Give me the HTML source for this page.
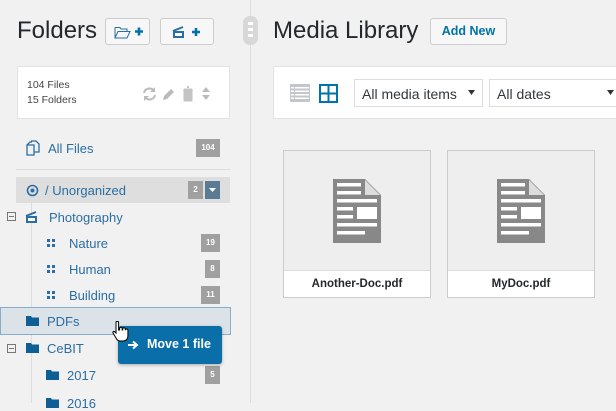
<!DOCTYPE html>
<html><head><meta charset="utf-8">
<style>
*{box-sizing:border-box;margin:0;padding:0}
body{width:616px;height:403px;overflow:hidden;background:#f1f1f1;font-family:"Liberation Sans",sans-serif;position:relative;color:#23282d}
.a{position:absolute}
.btn{position:absolute;border:1px solid #ccc;background:#f7f7f7;border-radius:3px}
.lbl{position:absolute;font-size:13px;color:#2b6ea3}
.bd{position:absolute;background:#a0a0a0;color:#fff;font-size:8px;font-weight:bold;text-align:center;line-height:18px;height:18px}
.fold{position:absolute;width:13px;height:10px}
</style></head><body>
<!-- left -->
<div class="a" style="left:17px;top:17px;font-size:24px;color:#23282d">Folders</div>
<div class="btn" style="left:105px;top:18px;width:45px;height:27px">
<svg class="a" style="left:8px;top:7px" width="30" height="13" viewBox="0 0 30 13"><path d="M1 1.5h5l1 1.5h6v2.5 M1 1.5V12 M1 12L4 5.5h12L13 12Z" fill="none" stroke="#2b6ea3" stroke-width="1"/><path d="M21 5.5h8M25 1.5v8" stroke="#0073aa" stroke-width="2.6"/></svg></div>
<div class="btn" style="left:160px;top:18px;width:54px;height:27px">
<svg class="a" style="left:11px;top:6px" width="32" height="14" viewBox="0 0 32 14"><path d="M1 6h11v7H1Z" fill="#2b6ea3"/><path d="M1 6 L11 2" stroke="#2b6ea3" stroke-width="2"/><rect x="3" y="8" width="7" height="3" fill="#fff"/><path d="M20 7h8M24 3v8" stroke="#0073aa" stroke-width="2.6"/></svg></div>
<div class="a" style="left:17px;top:66px;width:213px;height:53px;background:#fff;border:1px solid #e2e2e2"></div>
<div class="a" style="left:27px;top:78px;font-size:10.5px;color:#444;line-height:15px">104 Files<br>15 Folders</div>
<svg class="a" style="left:142px;top:86px" width="74" height="16" viewBox="0 0 74 16"><path d="M2 7a5.5 5.5 0 0 1 10-2M13 9a5.5 5.5 0 0 1-10 2" fill="none" stroke="#bbb" stroke-width="2"/><path d="M13 1v5h-5Z M2 15v-5h5Z" fill="#bbb"/><path d="M21 14l1-4 7-7 3 3-7 7Z" fill="#bbb"/><path d="M42 3h8M41 4h10M42 5h8v10h-8Z" fill="#c4c4c4" stroke="#c4c4c4"/><path d="M45 1h2" stroke="#c4c4c4" stroke-width="2"/><path d="M60 6l4-5 4 5Z M60 9l4 5 4-5Z" fill="#bbb"/></svg>
<svg class="a" style="left:26px;top:140px" width="14" height="16" viewBox="0 0 14 16"><path d="M1 5h7v10H1Z M5 1h5l3 3v8H8" fill="none" stroke="#2b6ea3" stroke-width="1.3"/><path d="M1 5l3-3h2" fill="none" stroke="#2b6ea3" stroke-width="1.3"/></svg>
<div class="lbl" style="left:48px;top:141px">All Files</div>
<div class="bd" style="left:196px;top:139px;width:24px">104</div>
<div class="a" style="left:16px;top:169px;width:214px;height:1px;background:#ddd"></div>
<div class="a" style="left:16px;top:177px;width:214px;height:26px;background:#dedede"></div>
<div class="a" style="left:31px;top:200px;width:1px;height:203px;background:#ddd"></div>
<svg class="a" style="left:26px;top:184px" width="13" height="13"><circle cx="6.5" cy="6.5" r="5" fill="none" stroke="#2b6ea3" stroke-width="1.6"/><circle cx="6.5" cy="6.5" r="2" fill="#2b6ea3"/></svg>
<div class="lbl" style="left:45px;top:183px">/ Unorganized</div>
<div class="bd" style="left:188px;top:181px;width:15px">2</div>
<div class="a" style="left:205px;top:181px;width:15px;height:18px;background:#5b7b94"></div>
<svg class="a" style="left:209px;top:188px" width="7" height="4"><path d="M0 0h7L3.5 4Z" fill="#fff"/></svg>
<!-- tree -->
<svg class="a" style="left:7px;top:212px" width="9" height="9"><rect x=".5" y=".5" width="8" height="8" fill="none" stroke="#777"/><path d="M2 4.5h5" stroke="#777"/></svg>
<svg class="a" style="left:25px;top:210px" width="14" height="13" viewBox="0 0 14 13"><path d="M1 6h11v7H1Z" fill="#2b6ea3"/><path d="M1 6 L11 2" stroke="#2b6ea3" stroke-width="2"/><rect x="3" y="8" width="7" height="3" fill="#fff"/></svg>
<div class="lbl" style="left:49px;top:210px">Photography</div>
<svg class="a" style="left:47px;top:239px" width="8" height="8"><rect width="3" height="3" fill="#2b6ea3"/><rect x="5" width="3" height="3" fill="#2b6ea3"/><rect y="5" width="3" height="3" fill="#2b6ea3"/><rect x="5" y="5" width="3" height="3" fill="#2b6ea3"/></svg>
<div class="lbl" style="left:69px;top:236px">Nature</div>
<div class="bd" style="left:201px;top:234px;width:19px">19</div>
<svg class="a" style="left:47px;top:265px" width="8" height="8"><rect width="3" height="3" fill="#2b6ea3"/><rect x="5" width="3" height="3" fill="#2b6ea3"/><rect y="5" width="3" height="3" fill="#2b6ea3"/><rect x="5" y="5" width="3" height="3" fill="#2b6ea3"/></svg>
<div class="lbl" style="left:69px;top:262px">Human</div>
<div class="bd" style="left:205px;top:260px;width:15px">8</div>
<svg class="a" style="left:47px;top:291px" width="8" height="8"><rect width="3" height="3" fill="#2b6ea3"/><rect x="5" width="3" height="3" fill="#2b6ea3"/><rect y="5" width="3" height="3" fill="#2b6ea3"/><rect x="5" y="5" width="3" height="3" fill="#2b6ea3"/></svg>
<div class="lbl" style="left:69px;top:288px">Building</div>
<div class="bd" style="left:201px;top:286px;width:19px">11</div>
<div class="a" style="left:0;top:307px;width:231px;height:28px;background:#dce3e8;border:1px solid #86aecb"></div>
<svg class="fold" style="left:26px;top:316px" viewBox="0 0 13 10"><path d="M0 0h5l1 1.5h7V10H0Z" fill="#0e5f93"/></svg>
<div class="lbl" style="left:47px;top:314px">PDFs</div>
<svg class="a" style="left:7px;top:344px" width="9" height="9"><rect x=".5" y=".5" width="8" height="8" fill="none" stroke="#777"/><path d="M2 4.5h5" stroke="#777"/></svg>
<svg class="fold" style="left:26px;top:343px" viewBox="0 0 13 10"><path d="M0 0h5l1 1.5h7V10H0Z" fill="#0e5f93"/></svg>
<div class="lbl" style="left:47px;top:341px">CeBIT</div>
<svg class="fold" style="left:46px;top:370px" viewBox="0 0 13 10"><path d="M0 0h5l1 1.5h7V10H0Z" fill="#0e5f93"/></svg>
<div class="lbl" style="left:67px;top:368px">2017</div>
<div class="bd" style="left:205px;top:366px;width:15px">5</div>
<svg class="fold" style="left:46px;top:398px" viewBox="0 0 13 10"><path d="M0 0h5l1 1.5h7V10H0Z" fill="#0e5f93"/></svg>
<div class="lbl" style="left:67px;top:396px">2016</div>
<div class="a" style="left:118px;top:326px;width:104px;height:38px;background:#0a6fa8;border-radius:3px;box-shadow:0 1px 3px rgba(0,0,0,.3)"></div>
<svg class="a" style="left:128px;top:340px" width="11" height="10"><path d="M0 5h8M5 1.5L9 5 5 8.5" fill="none" stroke="#fff" stroke-width="2"/></svg>
<div class="a" style="left:147px;top:337px;color:#fff;font-size:12.5px;font-weight:bold">Move 1 file</div>
<svg class="a" style="left:112px;top:321px" width="17" height="21" viewBox="0 0 17 21"><path d="M4 1.5a1.3 1.3 0 0 1 2.6 0V9h1V7.5a1.3 1.3 0 0 1 2.6 0V9h.5V8a1.3 1.3 0 0 1 2.6 0v1.3a1.3 1.3 0 0 1 2.6 0V15c0 3-2 5-4.5 5H8c-2 0-3-1-4-3L1 12c-.6-1 .6-2 1.6-1.3L4 12Z" fill="#fff" stroke="#000" stroke-width="1"/></svg>
<!-- splitter -->
<div class="a" style="left:250px;top:0;width:1px;height:403px;background:#ddd"></div>
<div class="a" style="left:243px;top:16px;width:15px;height:29px;background:#d8d8d8;border-radius:7px"></div>
<div class="a" style="left:248px;top:22px;width:5px;height:3px;background:#fff"></div>
<div class="a" style="left:248px;top:28px;width:5px;height:3px;background:#fff"></div>
<div class="a" style="left:248px;top:34px;width:5px;height:3px;background:#fff"></div>
<!-- right -->
<div class="a" style="left:273px;top:17px;font-size:24px;color:#23282d">Media Library</div>
<div class="btn" style="left:430px;top:18px;width:77px;height:27px;color:#0073aa;font-size:12.5px;font-weight:bold;text-align:center;line-height:25px">Add New</div>
<div class="a" style="left:273px;top:66px;width:360px;height:53px;background:#fff;border:1px solid #e2e2e2"></div>
<svg class="a" style="left:290px;top:84px" width="20" height="18"><g fill="#c3c7cb"><rect width="20" height="18"/></g><g fill="#fff"><rect x="5" y="3" width="14" height="1.5"/><rect x="5" y="6.5" width="14" height="1.5"/><rect x="5" y="10" width="14" height="1.5"/><rect x="5" y="13.5" width="14" height="1.5"/><rect x="1" y="3" width="3" height="1.5"/><rect x="1" y="6.5" width="3" height="1.5"/><rect x="1" y="10" width="3" height="1.5"/><rect x="1" y="13.5" width="3" height="1.5"/></g></svg>
<svg class="a" style="left:319px;top:84px" width="19" height="19"><path d="M1 1h17v17H1ZM9.5 1v17M1 9.5h17" fill="none" stroke="#0073aa" stroke-width="2"/></svg>
<div class="a" style="left:354px;top:79px;width:129px;height:28px;background:#fff;border:1px solid #ddd;font-size:14px;color:#32373c;padding:6px 0 0 7px">All media items</div>
<svg class="a" style="left:468px;top:90px" width="7" height="5"><path d="M0 0h7L3.5 5Z" fill="#333"/></svg>
<div class="a" style="left:489px;top:79px;width:140px;height:28px;background:#fff;border:1px solid #ddd;font-size:14px;color:#32373c;padding:6px 0 0 7px">All dates</div>
<svg class="a" style="left:607px;top:90px" width="7" height="5"><path d="M0 0h7L3.5 5Z" fill="#333"/></svg>
<div class="a" style="left:283px;top:150px;width:148px;height:148px;border:1px solid #ccc;background:#eee"></div>
<div class="a" style="left:284px;top:270px;width:146px;height:27px;background:#fff;border-top:1px solid #ddd;font-size:11.5px;font-weight:bold;text-align:center;line-height:26px;color:#23282d">Another-Doc.pdf</div>
<div class="a" style="left:447px;top:150px;width:148px;height:148px;border:1px solid #ccc;background:#eee"></div>
<div class="a" style="left:448px;top:270px;width:146px;height:27px;background:#fff;border-top:1px solid #ddd;font-size:11.5px;font-weight:bold;text-align:center;line-height:26px;color:#23282d">MyDoc.pdf</div>
<svg class="a" style="left:333px;top:179px" width="48" height="64" viewBox="0 0 48 64"><path d="M0 0H32L48 16V64H0Z" fill="#888"/><path d="M32 1V16H47Z" fill="#ddd"/><g fill="#fff"><rect x="4" y="4" width="24" height="3.5"/><rect x="4" y="12" width="24" height="3.5"/><rect x="4" y="20" width="40" height="3.5"/><rect x="4" y="28" width="16" height="3.5"/><rect x="24" y="28" width="20" height="12"/><rect x="4" y="36" width="16" height="3.5"/><rect x="4" y="44" width="40" height="3.5"/><rect x="4" y="52" width="28" height="3.5"/></g></svg>
<svg class="a" style="left:497px;top:179px" width="48" height="64" viewBox="0 0 48 64"><path d="M0 0H32L48 16V64H0Z" fill="#888"/><path d="M32 1V16H47Z" fill="#ddd"/><g fill="#fff"><rect x="4" y="4" width="24" height="3.5"/><rect x="4" y="12" width="24" height="3.5"/><rect x="4" y="20" width="40" height="3.5"/><rect x="4" y="28" width="16" height="3.5"/><rect x="24" y="28" width="20" height="12"/><rect x="4" y="36" width="16" height="3.5"/><rect x="4" y="44" width="40" height="3.5"/><rect x="4" y="52" width="28" height="3.5"/></g></svg>
</body></html>
